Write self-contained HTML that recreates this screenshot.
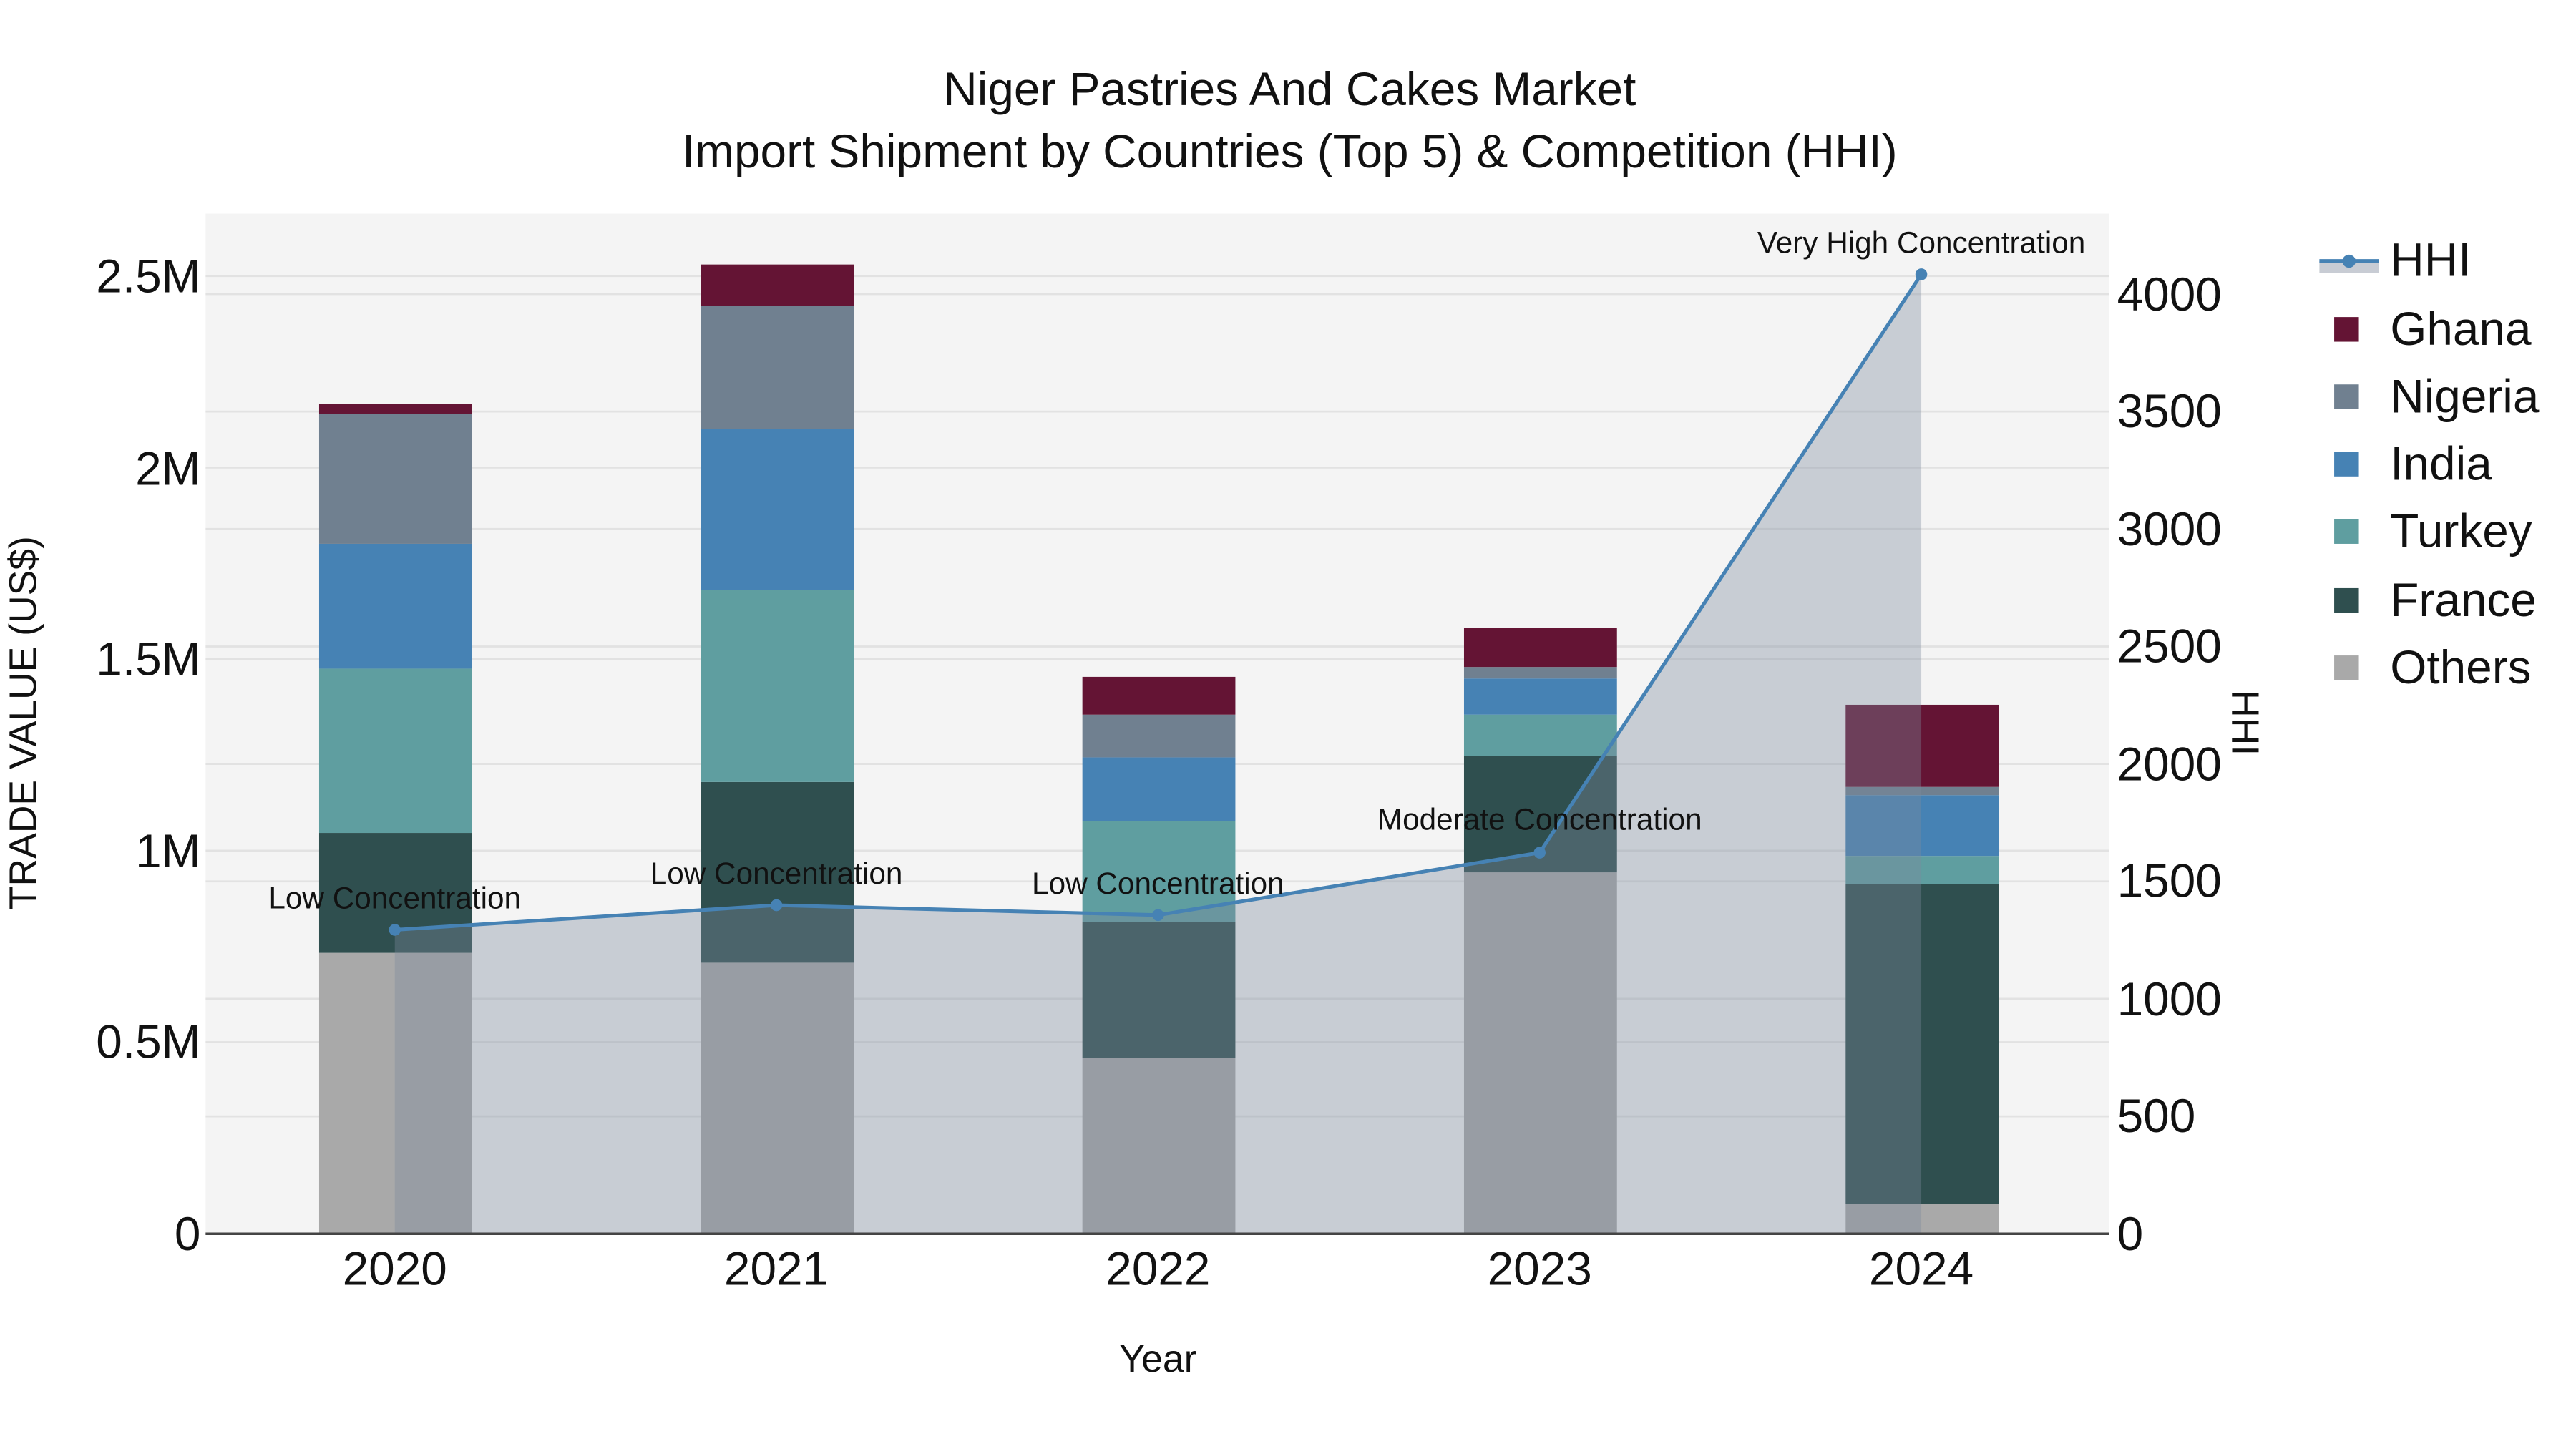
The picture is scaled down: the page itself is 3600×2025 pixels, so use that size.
<!DOCTYPE html>
<html><head><meta charset="utf-8"><style>
html,body{margin:0;padding:0;background:#fff;}
svg{display:block;}
text{font-family:"Liberation Sans",Arial,sans-serif;fill:#111;}
</style></head><body>
<svg width="3600" height="2025" viewBox="0 0 1566 882" preserveAspectRatio="none" xmlns="http://www.w3.org/2000/svg">
<rect x="0" y="0" width="1566" height="882" fill="#fff"/>
<rect x="125" y="130" width="1157" height="621" fill="#f4f4f4"/>
<g stroke="#e2e2e2" stroke-width="1.2">
<line x1="125" x2="1282" y1="634.4" y2="634.4"/>
<line x1="125" x2="1282" y1="517.8" y2="517.8"/>
<line x1="125" x2="1282" y1="401.2" y2="401.2"/>
<line x1="125" x2="1282" y1="284.6" y2="284.6"/>
<line x1="125" x2="1282" y1="168" y2="168"/>
<line x1="125" x2="1282" y1="679.5" y2="679.5"/>
<line x1="125" x2="1282" y1="608" y2="608"/>
<line x1="125" x2="1282" y1="536.5" y2="536.5"/>
<line x1="125" x2="1282" y1="465" y2="465"/>
<line x1="125" x2="1282" y1="393.5" y2="393.5"/>
<line x1="125" x2="1282" y1="322" y2="322"/>
<line x1="125" x2="1282" y1="250.5" y2="250.5"/>
<line x1="125" x2="1282" y1="179" y2="179"/>
</g>
<g>
<rect x="194" y="580" width="93" height="171" fill="#a9a9a9"/>
<rect x="194" y="507" width="93" height="73" fill="#2f4f4f"/>
<rect x="194" y="407" width="93" height="100" fill="#5f9ea0"/>
<rect x="194" y="331" width="93" height="76" fill="#4682b4"/>
<rect x="194" y="252" width="93" height="79" fill="#708090"/>
<rect x="194" y="246" width="93" height="6" fill="#641434"/>

<rect x="426" y="586" width="93" height="165" fill="#a9a9a9"/>
<rect x="426" y="476" width="93" height="110" fill="#2f4f4f"/>
<rect x="426" y="359" width="93" height="117" fill="#5f9ea0"/>
<rect x="426" y="261" width="93" height="98" fill="#4682b4"/>
<rect x="426" y="186" width="93" height="75" fill="#708090"/>
<rect x="426" y="161" width="93" height="25" fill="#641434"/>

<rect x="658" y="644" width="93" height="107" fill="#a9a9a9"/>
<rect x="658" y="561" width="93" height="83" fill="#2f4f4f"/>
<rect x="658" y="500" width="93" height="61" fill="#5f9ea0"/>
<rect x="658" y="461" width="93" height="39" fill="#4682b4"/>
<rect x="658" y="435" width="93" height="26" fill="#708090"/>
<rect x="658" y="412" width="93" height="23" fill="#641434"/>

<rect x="890" y="531" width="93" height="220" fill="#a9a9a9"/>
<rect x="890" y="460" width="93" height="71" fill="#2f4f4f"/>
<rect x="890" y="435" width="93" height="25" fill="#5f9ea0"/>
<rect x="890" y="413" width="93" height="22" fill="#4682b4"/>
<rect x="890" y="406" width="93" height="7" fill="#708090"/>
<rect x="890" y="382" width="93" height="24" fill="#641434"/>

<rect x="1122" y="733" width="93" height="18" fill="#a9a9a9"/>
<rect x="1122" y="538" width="93" height="195" fill="#2f4f4f"/>
<rect x="1122" y="521" width="93" height="17" fill="#5f9ea0"/>
<rect x="1122" y="484" width="93" height="37" fill="#4682b4"/>
<rect x="1122" y="479" width="93" height="5" fill="#708090"/>
<rect x="1122" y="429" width="93" height="50" fill="#641434"/>
</g>
<polygon points="240,566 472,551 704,557 936,519 1168,167 1168,751 240,751" fill="rgb(126,137,158)" fill-opacity="0.37"/>
<line x1="125" x2="1282" y1="751" y2="751" stroke="#444" stroke-width="1.5"/>
<polyline points="240,566 472,551 704,557 936,519 1168,167" fill="none" stroke="#4682b4" stroke-width="2.2"/>
<g fill="#4682b4">
<circle cx="240" cy="566" r="3.6"/><circle cx="472" cy="551" r="3.6"/><circle cx="704" cy="557" r="3.6"/><circle cx="936" cy="519" r="3.6"/><circle cx="1168" cy="167" r="3.6"/>
</g>
<g font-size="18.4" text-anchor="middle">
<text x="240" y="553">Low Concentration</text>
<text x="472" y="538">Low Concentration</text>
<text x="704" y="544">Low Concentration</text>
<text x="936" y="505">Moderate Concentration</text>
<text x="1168" y="154">Very High Concentration</text>
</g>
<g font-size="28.6" text-anchor="middle">
<text x="784" y="64">Niger Pastries And Cakes Market</text>
<text x="784" y="102">Import Shipment by Countries (Top 5) &amp; Competition (HHI)</text>
</g>
<g font-size="28.6" text-anchor="end">
<text x="122" y="761">0</text>
<text x="122" y="644">0.5M</text>
<text x="122" y="528">1M</text>
<text x="122" y="411">1.5M</text>
<text x="122" y="295">2M</text>
<text x="122" y="178">2.5M</text>
</g>
<g font-size="28.6" text-anchor="start">
<text x="1287" y="761">0</text>
<text x="1287" y="689">500</text>
<text x="1287" y="618">1000</text>
<text x="1287" y="546">1500</text>
<text x="1287" y="475">2000</text>
<text x="1287" y="403">2500</text>
<text x="1287" y="332">3000</text>
<text x="1287" y="260">3500</text>
<text x="1287" y="189">4000</text>
</g>
<g font-size="28.6" text-anchor="middle">
<text x="240" y="782">2020</text>
<text x="472" y="782">2021</text>
<text x="704" y="782">2022</text>
<text x="936" y="782">2023</text>
<text x="1168" y="782">2024</text>
</g>
<text x="704" y="835" font-size="23.3" text-anchor="middle">Year</text>
<text transform="translate(22,440) rotate(-90)" font-size="23.3" text-anchor="middle">TRADE VALUE (US$)</text>
<text transform="translate(1357,440) rotate(90)" font-size="23.3" text-anchor="middle">HHI</text>
<rect x="1410" y="159" width="36" height="7" fill="#c8ccd4"/>
<line x1="1410" x2="1446" y1="159" y2="159" stroke="#4682b4" stroke-width="2.5"/>
<circle cx="1428" cy="159" r="4" fill="#4682b4"/>
<g font-size="28.6">
<text x="1453" y="168">HHI</text>
<text x="1453" y="210">Ghana</text>
<text x="1453" y="251">Nigeria</text>
<text x="1453" y="292">India</text>
<text x="1453" y="333">Turkey</text>
<text x="1453" y="375">France</text>
<text x="1453" y="416">Others</text>
</g>
<rect x="1419" y="193" width="15" height="15" fill="#641434"/>
<rect x="1419" y="234" width="15" height="15" fill="#708090"/>
<rect x="1419" y="275" width="15" height="15" fill="#4682b4"/>
<rect x="1419" y="316" width="15" height="15" fill="#5f9ea0"/>
<rect x="1419" y="358" width="15" height="15" fill="#2f4f4f"/>
<rect x="1419" y="399" width="15" height="15" fill="#a9a9a9"/>
</svg>
</body></html>
